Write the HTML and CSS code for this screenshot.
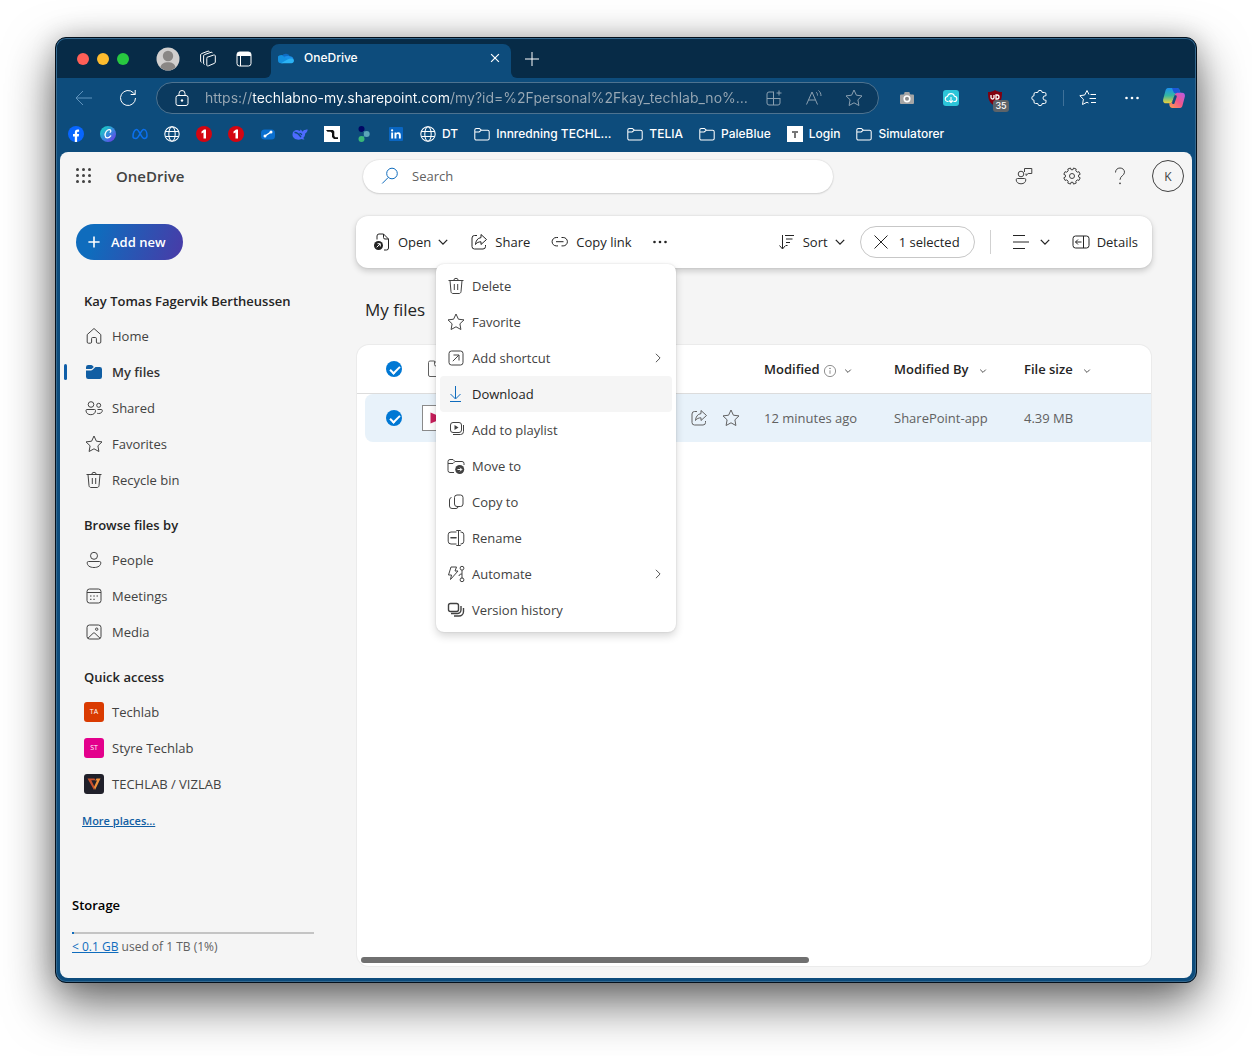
FILE: index.html
```html
<!DOCTYPE html>
<html lang="en">
<head>
<meta charset="utf-8">
<meta name="viewport" content="width=device-width, initial-scale=1">
<title>OneDrive</title>
<link rel="stylesheet" href="styles.css">
</head>
<body>
<svg class="sprite" aria-hidden="true">
  <symbol id="back" viewBox="0 0 20 20"><path d="M18 10H2.500M9 3 2 10l7 7"/></symbol>
  <symbol id="reload" viewBox="0 0 20 20"><path d="M17.500 10A7.500 7.500 0 1 1 15.300 4.700L17 6.500M17.200 2v4.500h-4.500"/></symbol>
  <symbol id="lock" viewBox="0 0 20 20"><rect x="4" y="7.500" width="12" height="10" rx="2"/><path d="M7 7.500V5.500a3 3 0 0 1 6 0v2"/><circle class="fill" cx="10" cy="12.500" r="1.200"/></symbol>
  <symbol id="copies" viewBox="0 0 20 20"><path d="M9 8.300 15.800 6c.8-.2 1.500.2 1.500 1v6c0 .7-.4 1.200-1 1.400l-6 2.500c-.8.300-1.500-.1-1.500-.9V9.500c0-.6 0-1 .2-1.200zM6.500 15.500c-.6-.2-.9-.6-.9-1.200V7c0-.7.300-1.200 1-1.400L13 3.300c.7-.2 1.200 0 1.500.5M3.500 13.300c-.6-.2-.9-.6-.9-1.200V6c0-.7.400-1.200 1-1.400L10 2.200c.7-.2 1.200 0 1.500.5"/></symbol>
  <symbol id="tabs" viewBox="0 0 20 20"><rect x="3" y="3" width="14" height="14" rx="2.500"/><path class="fill" d="M3 7V5.500A2.500 2.500 0 0 1 5.500 3h9A2.500 2.500 0 0 1 17 5.500V7z"/><path d="M6.500 7v10"/></symbol>
  <symbol id="close" viewBox="0 0 20 20"><path d="m3.500 3.500 13 13M16.500 3.500l-13 13"/></symbol>
  <symbol id="plus" viewBox="0 0 20 20"><path d="M10 3v14M3 10h14"/></symbol>
  <symbol id="apps" viewBox="0 0 20 20"><path d="M10 4H5a2 2 0 0 0-2 2v9a2 2 0 0 0 2 2h9a2 2 0 0 0 2-2v-5M3 10.500h13M9.500 4v13M15 2.500v5M12.500 5h5"/></symbol>
  <symbol id="aloud" viewBox="0 0 20 20"><path d="M2.500 16.500 8 4l5.500 12.500M4.500 12h7M12 4c1 .8 1.500 1.800 1.500 3.500M14.500 2.500c1.600 1.300 2.500 3 2.500 5.500"/></symbol>
  <symbol id="star" viewBox="0 0 20 20"><path d="m10 2 2.400 5.200 5.600.7-4.100 3.900 1 5.700L10 14.800l-4.900 2.700 1-5.700L2 7.900l5.600-.7z"/></symbol>
  <symbol id="starlist" viewBox="0 0 20 20"><path d="M11 6.500 9 2.500 6.700 7l-4.900.7 3.600 3.500-.9 5.300L9 14.200l1.500.8M12.500 6.500h5.500M11.500 10.500H18M13 14.500h5"/></symbol>
  <symbol id="puzzle" viewBox="-1 0 20 20"><path d="M5.500 4.500h2.300a2.200 2.200 0 0 1 4.400 0h2.300a1.500 1.500 0 0 1 1.500 1.500v1.800h-.8a2.200 2.200 0 0 0 0 4.400h.8V14a1.500 1.500 0 0 1-1.500 1.500h-2.300a2.200 2.200 0 0 1-4.400 0H5.500A1.500 1.500 0 0 1 4 14v-1.800a2.200 2.200 0 0 1 0-4.400V6a1.500 1.500 0 0 1 1.500-1.500z"/></symbol>
  <symbol id="dots" viewBox="0 0 20 20"><g class="fill"><circle cx="4.500" cy="10" r="1.300"/><circle cx="10" cy="10" r="1.300"/><circle cx="15.500" cy="10" r="1.300"/></g></symbol>
  <symbol id="globe" viewBox="0 0 20 20"><circle cx="10" cy="10" r="9"/><ellipse cx="10" cy="10" rx="4" ry="9"/><path d="M2 7h16M2 13h16"/></symbol>
  <symbol id="folder" viewBox="0 0 20 20"><path d="M1 5A2 2 0 0 1 3 3h3.700l2.500 2.200h7.800a2 2 0 0 1 2 2V15.500a2 2 0 0 1-2 2h-14a2 2 0 0 1-2-2zM1 7.500h5.500l2.700-2.300"/></symbol>
  <symbol id="search" viewBox="0 0 20 20"><circle cx="12" cy="7.500" r="5.300"/><path d="m8.200 11.500-6 6"/></symbol>
  <symbol id="waffle" viewBox="0 0 20 20"><g class="fill"><circle cx="3.500" cy="3.500" r="1.500"/><circle cx="9.500" cy="3.500" r="1.500"/><circle cx="15.500" cy="3.500" r="1.500"/><circle cx="3.500" cy="9.500" r="1.500"/><circle cx="9.500" cy="9.500" r="1.500"/><circle cx="15.500" cy="9.500" r="1.500"/><circle cx="3.500" cy="15.500" r="1.500"/><circle cx="9.500" cy="15.500" r="1.500"/><circle cx="15.500" cy="15.500" r="1.500"/></g></symbol>
  <symbol id="feedback" viewBox="0 0 20 20"><circle cx="7" cy="8" r="2.800"/><path d="M3.500 12.500h7a1.300 1.300 0 0 1 1.300 1.300c0 2.300-1.800 4-4.800 4s-4.800-1.700-4.800-4a1.300 1.300 0 0 1 1.300-1.300zM10.500 6V2.500h7.300v5h-3.600L12 9.500V7.500"/></symbol>
  <symbol id="gear" viewBox="0 0 20 20"><path d="m8.500 2 .5 1.700h2L11.500 2l2.700 1-.4 1.900 1.400 1.300 1.800-.5 1.200 2.600L16.600 9v2l1.600.8-1.200 2.600-1.800-.5-1.400 1.300.4 1.900-2.700 1-.5-1.800H9l-.5 1.800-2.700-1 .4-1.900-1.400-1.300-1.800.5-1.200-2.600L3.400 11V9l-1.600-.7L3 5.700l1.800.5 1.400-1.300L5.800 3z"/><circle cx="10" cy="10" r="2.500"/></symbol>
  <symbol id="help" viewBox="0 0 20 20"><path d="M5.500 6.500C5.500 3.800 7.400 2 10 2s4.500 1.800 4.500 4.200C14.500 9.500 10 10 10 13.800"/><circle class="fill" cx="10" cy="17.300" r=".9"/></symbol>
  <symbol id="home" viewBox="0 0 20 20"><path d="M3.200 8.600 10 2.500l6.800 6.100V16a1.200 1.200 0 0 1-1.200 1.200h-2a1.200 1.200 0 0 1-1.200-1.200v-3.500a1 1 0 0 0-1-1H8.600a1 1 0 0 0-1 1V16a1.200 1.200 0 0 1-1.200 1.200h-2A1.200 1.200 0 0 1 3.200 16z"/></symbol>
  <symbol id="files" viewBox="0 0 20 20"><path class="fill" d="M2 5.200A2.200 2.200 0 0 1 4.200 3h3c.5 0 .9.200 1.200.5L9.800 5 7.600 6.900a1 1 0 0 1-.7.200H2zm0 3.200h5a2 2 0 0 0 1.300-.5L11.500 5h4.300A2.200 2.200 0 0 1 18 7.200v7.600a2.200 2.200 0 0 1-2.200 2.200H4.200A2.200 2.200 0 0 1 2 14.800z"/></symbol>
  <symbol id="people" viewBox="0 0 20 20"><circle cx="7" cy="6.500" r="2.800"/><circle cx="14.700" cy="7.300" r="2"/><path d="M3 11.500h7.500a1 1 0 0 1 1 1c0 2.500-1.800 4.200-4.700 4.200S2 15 2 12.500a1 1 0 0 1 1-1zM13.500 11.500h3.800a1 1 0 0 1 1 1c0 1.800-1.400 3-3.600 3-.5 0-1-.1-1.500-.2"/></symbol>
  <symbol id="person" viewBox="0 0 20 20"><circle cx="10" cy="5.800" r="3.500"/><path d="M4.500 11.500h11a1.300 1.300 0 0 1 1.300 1.300c0 2.800-2.600 4.700-6.800 4.700s-6.800-1.900-6.800-4.700a1.300 1.300 0 0 1 1.300-1.300z"/></symbol>
  <symbol id="bin" viewBox="0 0 20 20"><path d="M2.500 4.500h15M7.800 4.500a2.200 2.200 0 0 1 4.400 0M4 4.500l1 11.200c.1 1 .9 1.800 1.900 1.800h6.200c1 0 1.800-.8 1.900-1.800l1-11.200M8.300 8v6M11.700 8v6"/></symbol>
  <symbol id="calendar" viewBox="0 0 20 20"><rect x="3" y="3" width="14" height="14" rx="2.500"/><path d="M3 6.500h14M6 10h1.500M9.300 10h1.500M12.500 10H14M6 13.300h1.500M9.300 13.300h1.500"/></symbol>
  <symbol id="image" viewBox="0 0 20 20"><rect x="3" y="3" width="14" height="14" rx="2.500"/><path d="m4 16.200 5.200-5a1.200 1.200 0 0 1 1.600 0l5.200 5"/><circle cx="12.700" cy="7.200" r="1.200"/></symbol>
  <symbol id="open" viewBox="0 0 20 20"><path d="M5 7.500V4a2 2 0 0 1 2-2h4.500L16.500 7v9a2 2 0 0 1-2 2H12M11.500 2v3.500A1.500 1.500 0 0 0 13 7h3.500"/><circle class="fill" cx="6.500" cy="13.500" r="4.500"/><path class="knock" d="m4.700 15.300 3.300-3.300M5.500 11.700h2.800v2.800"/></symbol>
  <symbol id="share" viewBox="0 0 20 20"><path d="M8 3.500H5.500a2.500 2.500 0 0 0-2.500 2.500v8.500a2.500 2.500 0 0 0 2.500 2.500H14a2.500 2.500 0 0 0 2.500-2.500V13"/><path d="M12 2.500 17.500 7.500 12 12.500V9.800c-2.500 0-4.200.8-5.500 2.700.3-3.800 2-6.400 5.500-6.900z"/></symbol>
  <symbol id="link" viewBox="0 0 20 20"><path d="M8 5.500H6.300a4.200 4.200 0 0 0 0 8.400H8M11.500 5.500h1.700a4.200 4.200 0 0 1 0 8.400h-1.700M6 9.700h7.500"/></symbol>
  <symbol id="down" viewBox="0 0 20 20"><path d="m3 6.500 7 7 7-7"/></symbol>
  <symbol id="right" viewBox="0 0 20 20"><path d="m6.500 3 7 7-7 7"/></symbol>
  <symbol id="sort" viewBox="0 0 20 20"><path d="M5.500 3v13.500M2.500 13.500l3 3.500 3-3.500M8 3.500h9M9 7h6.500M9 10.500h4M9 13.500h1.500"/></symbol>
  <symbol id="lines" viewBox="0 0 20 20"><path d="M2 3.500h12M2 10h16M2 16.500h12"/></symbol>
  <symbol id="details" viewBox="0 0 20 20"><rect x="2" y="4" width="16" height="12" rx="2.500"/><path d="M12.500 4v12M4.500 10h6M7 7.500 4.500 10 7 12.500"/></symbol>
  <symbol id="shortcut" viewBox="0 0 20 20"><rect x="3" y="3" width="14" height="14" rx="2.500"/><path d="m6.800 13.200 6-6M7.500 7H13v5.500"/></symbol>
  <symbol id="download" viewBox="0 0 20 20"><path d="M9.500 2v12.500M4.500 10l5 5 5-5M4 17.500h11"/></symbol>
  <symbol id="playlist" viewBox="0 0 20 20"><rect x="4.500" y="2.500" width="11" height="10" rx="2.500"/><path d="M17.500 5v6.500a3 3 0 0 1-3 3H7"/><path class="fill" d="m8.500 5 4 2.500-4 2.500z"/></symbol>
  <symbol id="move" viewBox="0 0 20 20"><path d="M8 16.500H4a2 2 0 0 1-2-2v-9a2 2 0 0 1 2-2h3l2 2h7a2 2 0 0 1 2 2V9M2 7.500h5l2-2"/><circle class="fill" cx="13.700" cy="13.500" r="4.500"/><path class="knock" d="M11.500 13.500h4.200M14 11.700l1.800 1.800-1.800 1.800"/></symbol>
  <symbol id="copyto" viewBox="0 0 20 20"><rect x="8.500" y="3" width="8.500" height="11.500" rx="2.500"/><path d="M5.500 5.500A2.500 2.500 0 0 0 3.500 8v6A2.500 2.500 0 0 0 6 16.500h4a2 2 0 0 0 2-2"/></symbol>
  <symbol id="rename" viewBox="0 0 20 20"><path d="M10.500 4H5a2.800 2.800 0 0 0-2.800 2.800v6.400A2.800 2.800 0 0 0 5 16h5.500M14.500 4h.5a2.800 2.800 0 0 1 2.800 2.800v6.400A2.800 2.800 0 0 1 15 16h-.5M12.500 2.500v15M10.300 2.500h4.400M10.300 17.500h4.400M4.500 9.500h6M4.500 10h6"/></symbol>
  <symbol id="automate" viewBox="0 0 20 20"><path d="M5 3h5.500L9 7h3l-7.500 8.500L5.500 11H2.500zM16 6v8.500M16 10c-1.500 0-3 .5-3 2"/><circle cx="16" cy="4.200" r="1.900"/><circle cx="16" cy="15.800" r="1.900"/></symbol>
  <symbol id="versions" viewBox="0 0 20 20"><rect x="2.500" y="3.500" width="10" height="8" rx="2" stroke-width="1.400"/><path stroke-width="1.400" d="M15 6v3.800a3.700 3.700 0 0 1-3.700 3.700H5M17.500 8v3.500a4.500 4.500 0 0 1-4.500 4.500H8"/></symbol>
  <symbol id="info" viewBox="0 0 20 20"><circle cx="10" cy="10" r="8"/><path d="M10 9v5"/><circle class="fill" cx="10" cy="6.300" r="1"/></symbol>
  <symbol id="page" viewBox="0 0 20 20"><path d="M3.500 3.500A1.500 1.500 0 0 1 5 2h4.500l5 5v9.500A1.500 1.500 0 0 1 13 17.500H5a1.500 1.500 0 0 1-1.500-1.500zM9.500 2v3.500A1.500 1.500 0 0 0 11 7h3.500"/></symbol>
</svg>

<div class="window">
  <div class="titlebar">
    <div class="titlebar-start">
      <div class="lights"><button class="light red" aria-label="Close window"></button><button class="light amber" aria-label="Minimise window"></button><button class="light green" aria-label="Zoom window"></button></div>
      <button class="profile" aria-label="Profile"><svg viewBox="0 0 24 24"><circle cx="12" cy="12" r="11.500" fill="#d1cfce"/><circle cx="12" cy="9" r="5.200" fill="#8a8785"/><path d="M4.300 20.500c1-4 4-5.300 7.700-5.300s6.700 1.300 7.700 5.300a11.500 11.500 0 0 1-15.400 0z" fill="#8a8785"/></svg></button>
      <button class="tool" aria-label="Workspaces"><svg class="icon"><use href="#copies"/></svg></button>
      <button class="tool" aria-label="Tab actions"><svg class="icon"><use href="#tabs"/></svg></button>
    </div>
    <div class="tab-slot">
      <div class="tab">
        <svg class="cloud" viewBox="0 0 16 16"><path d="M4 5.800A4.500 4.500 0 0 1 12 6.500L8 10 1 10z" fill="#0f6cc4"/><path d="M11.500 6.300A3.500 3.500 0 0 1 15.500 9.500L9 10.500 6 6.800c2-.8 3.800-.9 5.500-.5z" fill="#1b8fe8"/><path d="M0 10.300a3.400 3.400 0 0 1 6-3.500l6 3.700-7 2.800H3a3 3 0 0 1-3-3z" fill="#1490df"/><path d="M3 13.300 9.500 9.500c2-1 4.500-1.500 6-.3 1.200 2-.2 4.100-2 4.100z" fill="#2bb3f5"/></svg>
        <span class="tab-title">OneDrive</span>
        <button class="tab-close" aria-label="Close tab"><svg class="icon tiny"><use href="#close"/></svg></button>
      </div>
    </div>
    <div class="titlebar-end"><button class="tool" aria-label="New tab"><svg class="icon"><use href="#plus"/></svg></button></div>
  </div>

  <div class="toolbar">
    <button class="bar-btn dim" aria-label="Back"><svg class="icon"><use href="#back"/></svg></button>
    <button class="bar-btn" aria-label="Reload"><svg class="icon"><use href="#reload"/></svg></button>
    <div class="address">
      <svg class="icon"><use href="#lock"/></svg>
      <input class="url" type="text" aria-label="Address" value="https://techlabno-my.sharepoint.com/my?id=%2Fpersonal%2Fkay_techlab_no%…">
      <button class="addr-btn" aria-label="Apps"><svg class="icon"><use href="#apps"/></svg></button>
      <button class="addr-btn" aria-label="Read aloud"><svg class="icon"><use href="#aloud"/></svg></button>
      <button class="addr-btn" aria-label="Add to favourites"><svg class="icon"><use href="#star"/></svg></button>
    </div>
    <div class="extensions">
      <button class="bar-btn" aria-label="Screenshot"><svg class="badge-icon" viewBox="0 0 16 16"><path d="M2 4.500h2.500L5.500 3V2h5v1l1 1.500H14a1 1 0 0 1 1 1V13a1 1 0 0 1-1 1H2a1 1 0 0 1-1-1V5.500a1 1 0 0 1 1-1z" fill="#a5a5a5"/><circle cx="8" cy="8.800" r="2.800" fill="#8c8c8c" stroke="#fff" stroke-width="1.600"/></svg></button>
      <button class="bar-btn" aria-label="Downloader"><svg class="badge-icon" viewBox="0 0 16 16"><rect width="16" height="16" rx="3" fill="#2cc5d9"/><path d="M5.500 11.500H5a2.500 2.500 0 0 1-.5-5 3.600 3.600 0 0 1 7-.2A2.600 2.600 0 0 1 11 11.500h-.5M8 7v5.500M6 10.500l2 2 2-2" fill="none" stroke="#fff" stroke-width="1.100"/></svg></button>
      <button class="bar-btn counter" aria-label="Blocker"><svg class="badge-icon" viewBox="0 0 16 16"><path d="M8 0c2 1.500 4 2 7 2 0 7-1 11-7 14C2 13 1 9 1 2c3 0 5-.5 7-2z" fill="#800010"/><path d="M4 5v2.500a1.500 1.500 0 0 0 3 0V5M9 9V5h1a2 2 0 0 1 0 4z" fill="none" stroke="#fff" stroke-width="1.300"/></svg><span class="count">35</span></button>
      <button class="bar-btn" aria-label="Extensions"><svg class="icon"><use href="#puzzle"/></svg></button>
      <span class="bar-rule"></span>
      <button class="bar-btn" aria-label="Favourites"><svg class="icon"><use href="#starlist"/></svg></button>
      <button class="bar-btn" aria-label="Settings and more"><svg class="icon"><use href="#dots"/></svg></button>
      <button class="copilot" aria-label="Copilot"><svg viewBox="0 0 22 20"><defs><linearGradient id="cp1" x1="0" y1="0" x2="0" y2="1"><stop offset="0" stop-color="#1b8ff0"/><stop offset=".5" stop-color="#35b8a0"/><stop offset="1" stop-color="#f2d13a"/></linearGradient><linearGradient id="cp2" x1="1" y1="0" x2="0" y2="1"><stop offset="0" stop-color="#b45be8"/><stop offset=".5" stop-color="#f0568c"/><stop offset="1" stop-color="#fba04a"/></linearGradient></defs><path d="M5 0h9c1.500 0 2.300 1 2.700 2.500L17.500 5H14c-1.500 0-2 1-2.400 2.300L9.500 13c-.5 1.500-1.300 2.300-3 2.300H3c-2.500 0-3.400-1.800-2.700-4.500L2.500 2.500C3 .9 3.700 0 5 0z" fill="url(#cp1)"/><path d="M9 0h5c1.500 0 2.300 1 2.700 2.500L17.500 5H14L11 5z" fill="#1c57d8"/><path d="M17 20H9.500c-1.800 0-2.600-1-3-2.500l-.3-2.200c2 0 2.900-.8 3.400-2.300L12 6.500c.5-1.200 1.500-1.700 3.400-1.700H19c2.500 0 3.400 1.800 2.700 4.500l-2.200 8.200c-.5 1.600-1 2.500-2.500 2.500z" fill="url(#cp2)"/><path d="m12.500 8.500-2.200 6.300" stroke="#0d4c7c" stroke-width="2.500" stroke-linecap="round"/></svg></button>
    </div>
  </div>

  <nav class="bookmarks" aria-label="Bookmarks">
    <a class="mark" href="#" aria-label="Facebook"><svg viewBox="0 0 16 16"><circle cx="8" cy="8" r="8" fill="#0866ff"/><path d="M6.800 16v-5.500H5V8.100h1.800V6.900c0-2.200 1-3.300 3-3.300.5 0 1 .1 1.300.2v2h-.9c-.9 0-1.100.4-1.100 1.200v1.100h2l-.4 2.400H9.100V16z" fill="#fff"/></svg></a>
    <a class="mark" href="#" aria-label="Canva"><svg viewBox="0 0 16 16"><defs><linearGradient id="cv" x1="0" y1="0" x2="1" y2="1"><stop offset=".2" stop-color="#1fbfc9"/><stop offset=".6" stop-color="#3e7be0"/><stop offset="1" stop-color="#7d2ae8"/></linearGradient></defs><circle cx="8" cy="8" r="8" fill="url(#cv)"/><path d="M10.200 6.300c1-.6.800-2.800-1.200-2.600-2.400.2-4.200 3.300-3.900 5.800.3 3 3.600 3.200 5.600.4" fill="none" stroke="#fff" stroke-width="1.300" stroke-linecap="round"/></svg></a>
    <a class="mark" href="#" aria-label="Meta"><svg viewBox="0 0 16 16"><path d="M1 10.500C1 7 2.500 3.500 4.500 3.500c3 0 4.500 9 7.800 9C14 12.500 15 11.500 15 9.500c0-3-1.300-6-3.300-6-3 0-4.500 9-7.800 9C2 12.500 1 12 1 10.500z" fill="none" stroke="#0b70ee" stroke-width="1.500"/></svg></a>
    <a class="mark" href="#" aria-label="Site"><svg class="icon"><use href="#globe"/></svg></a>
    <a class="mark" href="#" aria-label="News"><svg viewBox="0 0 16 16"><circle cx="8" cy="8" r="8" fill="#d40511"/><path d="M5.500 5.500 8 3.500h2V12.500H7.500V6.500l-2 1z" fill="#fff"/></svg></a>
    <a class="mark" href="#" aria-label="News archive"><svg viewBox="0 0 16 16"><circle cx="8" cy="8" r="8" fill="#d40511"/><path d="M5.500 5.500 8 3.500h2V12.500H7.500V6.500l-2 1z" fill="#fff"/></svg></a>
    <a class="mark" href="#" aria-label="Cloud"><svg viewBox="0 0 16 16"><rect x="1" y="3.500" width="14" height="10" rx="3.500" fill="#0a6fcf"/><path d="m5 10 6-4" stroke="#fff" stroke-width="1.500"/><circle cx="5" cy="10" r="1.500" fill="#fff"/><circle cx="11" cy="6" r="1.500" fill="#fff"/></svg></a>
    <a class="mark" href="#" aria-label="Whale"><svg viewBox="0 0 16 16"><path d="M.5 8.500C.5 5.500 2.500 4 5 4c1.500 0 2.200.8 3 1l.5-1.500c.8.500 1.700 1.500 2 2.200.5-1.200 1.500-1.700 2.500-1.700l2.500-.8c.3 2-.8 3.500-2.300 4.300 0 2-1 3.500-2 4.500l1.300 1.200c-1 .5-2.200.3-3-.2C5.500 14.700.5 13 .5 8.500z" fill="#4d6bfe"/><path d="M2.500 6.500c3-.3 5 2.500 6.500 4.700M7.500 7.500c1-.3 2 .5 2.200 1.500" fill="none" stroke="#0d4c7c" stroke-width="1.300"/></svg></a>
    <a class="mark" href="#" aria-label="Techlab"><svg viewBox="0 0 16 16"><path d="M0 0h16v16H0z" fill="#fff"/><path d="M2 4h7l1.300 1.500V10l1 1.200H14V13H10L8 11V7L6.500 5.800H3.500z" fill="#111"/></svg></a>
    <a class="mark" href="#" aria-label="Dashboard"><svg viewBox="0 0 16 16"><path d="m6 4 5 4-5 4" fill="none" stroke="#2c7aa0" stroke-width="1.500"/><circle cx="5.500" cy="3" r="3" fill="#020764"/><circle cx="10.700" cy="8" r="3" fill="#5ba5b8"/><circle cx="5.500" cy="13" r="3" fill="#3ab778"/></svg></a>
    <a class="mark" href="#" aria-label="LinkedIn"><svg viewBox="0 0 16 16"><rect x="1" y="1" width="14" height="14" rx="1" fill="#0a66c2"/><path d="M3.200 6.500h1.900v6H3.200zM6.500 6.500h1.800v.9c.9-1.600 4.500-1.600 4.500 1.500v3.600h-1.900V9.400c0-1.900-2.500-1.700-2.500 0v3.100H6.500z" fill="#fff"/><circle cx="4.100" cy="4.400" r="1.100" fill="#fff"/></svg></a>
    <a class="mark" href="#"><svg class="icon"><use href="#globe"/></svg>DT</a>
    <a class="mark" href="#"><svg class="icon"><use href="#folder"/></svg>Innredning TECHL…</a>
    <a class="mark" href="#"><svg class="icon"><use href="#folder"/></svg>TELIA</a>
    <a class="mark" href="#"><svg class="icon"><use href="#folder"/></svg>PaleBlue</a>
    <a class="mark" href="#"><svg viewBox="0 0 16 16"><path d="M0 0h16v16H0z" fill="#fff"/><path d="M5 5h6v2H9v5H7V7H5z" fill="#777"/></svg>Login</a>
    <a class="mark" href="#"><svg class="icon"><use href="#folder"/></svg>Simulatorer</a>
  </nav>

  <div class="page">
    <header class="header">
      <button class="waffle" aria-label="App launcher"><svg class="icon"><use href="#waffle"/></svg></button>
      <a class="brand" href="#">OneDrive</a>
      <label class="search"><svg class="icon"><use href="#search"/></svg><input type="search" placeholder="Search" aria-label="Search"></label>
      <div class="header-tools">
        <button class="head-btn" aria-label="Feedback"><svg class="icon"><use href="#feedback"/></svg></button>
        <button class="head-btn" aria-label="Settings"><svg class="icon"><use href="#gear"/></svg></button>
        <button class="head-btn" aria-label="Help"><svg class="icon"><use href="#help"/></svg></button>
        <button class="head-btn" aria-label="Account"><span class="avatar">K</span></button>
      </div>
    </header>

    <div class="body">
      <aside class="sidebar">
        <button class="add-new"><svg class="icon"><use href="#plus"/></svg>Add new</button>
        <nav class="nav" aria-label="Files">
          <h2>Kay Tomas Fagervik Bertheussen</h2>
          <a class="nav-row" href="#"><svg class="icon"><use href="#home"/></svg>Home</a>
          <a class="nav-row current" href="#" aria-current="page"><svg class="icon"><use href="#files"/></svg>My files</a>
          <a class="nav-row" href="#"><svg class="icon"><use href="#people"/></svg>Shared</a>
          <a class="nav-row" href="#"><svg class="icon"><use href="#star"/></svg>Favorites</a>
          <a class="nav-row" href="#"><svg class="icon"><use href="#bin"/></svg>Recycle bin</a>
          <h2>Browse files by</h2>
          <a class="nav-row" href="#"><svg class="icon"><use href="#person"/></svg>People</a>
          <a class="nav-row" href="#"><svg class="icon"><use href="#calendar"/></svg>Meetings</a>
          <a class="nav-row" href="#"><svg class="icon"><use href="#image"/></svg>Media</a>
          <h2>Quick access</h2>
          <a class="nav-row" href="#"><span class="tile orange">TA</span>Techlab</a>
          <a class="nav-row" href="#"><span class="tile pink">ST</span>Styre Techlab</a>
          <a class="nav-row" href="#"><span class="tile dark"><svg viewBox="0 0 20 20"><path d="M3.500 4.500h7l1 1.700H7.300l3.500 7.300L10 16z" fill="#c9502c"/><path d="M12.500 4.500h4L11 16l-1-3 3-6.500h-1.700z" fill="#f0913a"/></svg></span>TECHLAB / VIZLAB</a>
        </nav>
        <a class="more" href="#">More places...</a>
        <section class="storage">
          <h2>Storage</h2>
          <div class="meter"><div class="meter-used" style="width:1%"></div></div>
          <p><a href="#">&lt; 0.1 GB</a> used of 1 TB (1%)</p>
        </section>
      </aside>

      <main class="main">
        <div class="commands">
          <button class="cmd"><svg class="icon"><use href="#open"/></svg>Open<svg class="icon chev"><use href="#down"/></svg></button>
          <button class="cmd"><svg class="icon"><use href="#share"/></svg>Share</button>
          <button class="cmd"><svg class="icon"><use href="#link"/></svg>Copy link</button>
          <button class="cmd more-cmd" aria-label="More actions" aria-expanded="true"><svg class="icon"><use href="#dots"/></svg></button>
          <button class="cmd sort"><svg class="icon"><use href="#sort"/></svg>Sort<svg class="icon chev"><use href="#down"/></svg></button>
          <button class="cmd selected"><svg class="icon"><use href="#close"/></svg>1 selected</button>
          <span class="cmd-rule"></span>
          <button class="cmd view" aria-label="View"><svg class="icon"><use href="#lines"/></svg><svg class="icon chev"><use href="#down"/></svg></button>
          <button class="cmd"><svg class="icon"><use href="#details"/></svg>Details</button>

          <div class="menu" role="menu">
            <button role="menuitem"><svg class="icon"><use href="#bin"/></svg>Delete</button>
            <button role="menuitem"><svg class="icon"><use href="#star"/></svg>Favorite</button>
            <button role="menuitem"><svg class="icon"><use href="#shortcut"/></svg>Add shortcut<svg class="icon arrow"><use href="#right"/></svg></button>
            <button role="menuitem" class="hover"><svg class="icon"><use href="#download"/></svg>Download</button>
            <button role="menuitem"><svg class="icon"><use href="#playlist"/></svg>Add to playlist</button>
            <button role="menuitem"><svg class="icon"><use href="#move"/></svg>Move to</button>
            <button role="menuitem"><svg class="icon"><use href="#copyto"/></svg>Copy to</button>
            <button role="menuitem"><svg class="icon"><use href="#rename"/></svg>Rename</button>
            <button role="menuitem"><svg class="icon"><use href="#automate"/></svg>Automate<svg class="icon arrow"><use href="#right"/></svg></button>
            <button role="menuitem"><svg class="icon"><use href="#versions"/></svg>Version history</button>
          </div>
        </div>

        <h1>My files</h1>

        <div class="card">
          <table class="files">
            <colgroup><col class="c-lead"><col class="c-check"><col><col class="c-col"><col class="c-col"><col class="c-size"></colgroup>
            <thead>
              <tr>
                <td></td>
                <td><input class="tick" type="checkbox" checked aria-label="Select all"></td>
                <td><svg class="icon head-page"><use href="#page"/></svg></td>
                <th>Modified <svg class="icon small info"><use href="#info"/></svg><svg class="icon caret"><use href="#down"/></svg></th>
                <th>Modified By <svg class="icon caret"><use href="#down"/></svg></th>
                <th>File size <svg class="icon caret"><use href="#down"/></svg></th>
              </tr>
            </thead>
            <tbody>
              <tr>
                <td></td>
                <td class="first"><input class="tick" type="checkbox" checked aria-label="Select file"></td>
                <td><div class="name-cell"><svg class="video" viewBox="0 0 36 26"><rect x=".5" y=".5" width="35" height="25" fill="#fff" stroke="#8a8a8a"/><path d="m8.500 7.500 13 5.500-13 5.500z" fill="#c81e5b"/></svg><span class="row-tools"><button aria-label="Share file"><svg class="icon"><use href="#share"/></svg></button><button aria-label="Favorite file"><svg class="icon"><use href="#star"/></svg></button></span></div></td>
                <td>12 minutes ago</td>
                <td>SharePoint-app</td>
                <td>4.39 MB</td>
              </tr>
            </tbody>
          </table>
          <div class="scroll"><div class="thumb"></div></div>
        </div>
      </main>
    </div>
  </div>
</div>
</body>
</html>
```
FILE: styles.css
```css
* { box-sizing: border-box; }

body {
  margin: 0;
  min-height: 100vh;
  padding: 37px 55px 73px;
  display: flex;
  background: #fff;
  color: #242424;
  font: 13px/20px "Open Sans", "Noto Sans", sans-serif;
}

button, input { font: inherit; color: inherit; }
button {
  margin: 0;
  padding: 0;
  border: 0;
  background: none;
  display: flex;
  align-items: center;
  justify-content: center;
  flex-shrink: 0;
}
a { color: inherit; text-decoration: none; }
h1, h2, p { margin: 0; }

.sprite { position: absolute; width: 0; height: 0; }
.icon {
  width: 20px;
  height: 20px;
  flex-shrink: 0;
  fill: none;
  stroke: currentColor;
  stroke-width: 1;
}
.fill { fill: currentColor; stroke: none; }
.knock { stroke: #fff; }

/* Browser window */
.window {
  flex: 1;
  min-width: 0;
  display: flex;
  flex-direction: column;
  padding: 1px 4px 4px;
  border: 1px solid #03101c;
  border-radius: 11px;
  background: #0d4c7c;
  box-shadow: inset 0 0 0 1px #35698f, 0 20px 50px rgba(0, 0, 0, .6), 0 0 24px rgba(0, 0, 0, .18);
  color: #fff;
}

.titlebar {
  display: flex;
  height: 39px;
  margin: 0 -3px;
  font: 500 12px/16px Inter, "Liberation Sans", sans-serif;
}
.titlebar-start, .titlebar-end, .tab-slot { background: #072b47; }
.titlebar-start {
  flex: 0 0 214px;
  display: flex;
  align-items: center;
  padding-left: 20px;
  border-radius: 9px 0 6px 0;
}
.titlebar-end {
  flex: 1;
  display: flex;
  align-items: center;
  padding-left: 3px;
  border-radius: 0 9px 0 6px;
}
.lights { display: flex; gap: 8px; }
.light { width: 12px; height: 12px; border-radius: 50%; }
.red { background: #ff5f57; }
.amber { background: #febc2e; }
.green { background: #28c840; }
.profile { width: 24px; margin: 0 10px 0 27px; }
.profile svg { width: 24px; height: 24px; }
.tool { width: 36px; height: 32px; }
.tab-slot { flex: 0 1 240px; padding-top: 5px; }
.tab {
  height: 34px;
  display: flex;
  align-items: center;
  padding: 0 8px 6px 7px;
  border-radius: 8px 8px 0 0;
  background: #0d4c7c;
}
.cloud { width: 16px; height: 16px; margin-right: 10px; }
.tab-title { flex: 1; }
.tab-close { width: 16px; height: 16px; }
.tiny { width: 12px; height: 12px; stroke-width: 2; }

.toolbar {
  display: flex;
  align-items: center;
  height: 40px;
  margin: 0 -2px;
}
.bar-btn { width: 44px; height: 32px; }
.toolbar > .bar-btn:first-child { margin-left: 4px; }
.dim { color: #5f93bd; }
.address {
  flex: 1;
  min-width: 0;
  height: 32px;
  display: flex;
  align-items: center;
  margin: 0 6px;
  padding: 0 4px 0 15px;
  border: 1px solid #4e7390;
  border-radius: 16px;
  background: #0b3a5f;
}
.url {
  flex: 1;
  min-width: 0;
  height: 24px;
  margin-left: 13px;
  padding: 0;
  border: 0;
  font: 14px/24px Inter, "Liberation Sans", sans-serif;
  color: #9aa9b5;
  background: linear-gradient(90deg, #9aa9b5 48px, #fff 48px 246px, #9aa9b5 246px) text;
  -webkit-text-fill-color: transparent;
}
.addr-btn { width: 40px; height: 30px; color: #8ba0b1; }
.extensions { display: flex; align-items: center; }
.badge-icon { width: 16px; height: 16px; }
.counter { position: relative; }
.count {
  position: absolute;
  left: 20px;
  top: 18px;
  width: 16px;
  border-radius: 3px;
  background: #5d6368;
  font: 500 9px/12px Inter, "Liberation Sans", sans-serif;
  text-align: center;
}
.bar-rule { width: 1px; height: 16px; margin: 0 2px; background: #3f7199; }
.copilot { width: 40px; }
.copilot svg { width: 22px; height: 20px; }

.bookmarks {
  display: flex;
  align-items: center;
  height: 34px;
  overflow: hidden;
  font: 500 12px/16px Inter, "Liberation Sans", sans-serif;
  white-space: nowrap;
}
.mark { display: flex; align-items: center; gap: 6px; padding: 0 8px 2px; }
.mark svg { width: 16px; height: 16px; flex-shrink: 0; }
.mark .icon { stroke-width: 1.300; }

/* OneDrive page */
.page {
  flex: 1;
  display: flex;
  flex-direction: column;
  border-radius: 8px;
  background: #f5f5f5;
  color: #242424;
}
.header { display: flex; align-items: center; height: 48px; color: #424242; }
.waffle { width: 48px; height: 48px; }
.brand { width: 255px; padding-left: 8px; font-size: 15px; font-weight: 600; }
.search {
  flex: 0 1 470px;
  height: 33px;
  display: flex;
  align-items: center;
  gap: 12px;
  padding: 0 17px;
  border-radius: 17px;
  background: #fff;
  box-shadow: 0 0 2px rgba(0, 0, 0, .14), 0 1px 2px rgba(0, 0, 0, .12);
}
.search .icon { color: #0f6cbd; }
.search input { flex: 1; min-width: 0; padding: 0; border: 0; background: none; }
.search input::placeholder { color: #616161; opacity: 1; }
.header-tools { display: flex; margin-left: auto; }
.head-btn { width: 48px; height: 48px; }
.avatar {
  width: 32px;
  height: 32px;
  border: 1px solid #424242;
  border-radius: 50%;
  font-size: 12px;
  line-height: 32px;
}

.body { flex: 1; display: flex; }
.sidebar {
  flex: 0 0 296px;
  display: flex;
  flex-direction: column;
  align-items: flex-start;
  padding: 24px 0 21px;
}
.add-new {
  width: 107px;
  height: 36px;
  justify-content: flex-start;
  margin: 0 0 14px 16px;
  padding-left: 10px;
  gap: 9px;
  border-radius: 18px;
  background: linear-gradient(110deg, #0f6cbd 20%, #4a3aa7);
  color: #fff;
  font-weight: 600;
}
.add-new .icon { width: 16px; height: 16px; stroke-width: 2; }
.nav { align-self: stretch; }
h2 { font-size: 13px; font-weight: 600; line-height: 20px; }
.nav h2 { padding: 17px 24px 7px; }
.nav-row {
  display: flex;
  align-items: center;
  gap: 8px;
  height: 36px;
  padding-left: 24px;
  color: #424242;
}
.current { color: #333; font-weight: 600; }
.current::before {
  content: "";
  width: 3px;
  height: 16px;
  margin: 0 9px 0 -20px;
  border-radius: 2px;
  background: #0f5ea8;
}
.current .icon { color: #115ea3; stroke: none; }
.tile {
  width: 20px;
  height: 20px;
  border-radius: 3px;
  color: #fff;
  font-size: 7px;
  text-align: center;
}
.tile svg { display: block; width: 20px; height: 20px; }
.orange { background: #da3b01; }
.pink { background: #e3008c; }
.dark { background: #20202a; }
.more {
  margin: 9px 0 0 22px;
  color: #115ea3;
  font-size: 11px;
  font-weight: 600;
  text-decoration: underline;
}
.storage {
  align-self: stretch;
  margin: auto 42px 0 12px;
  color: #616161;
  font-size: 12px;
}
.storage h2 { color: #000; }
.storage a { color: #0f6cbd; text-decoration: underline; }
.meter { height: 2px; margin: 17px 0 3px; background: #c4c4c4; }
.meter-used { height: 2px; background: #0f6cbd; }

.main {
  flex: 1;
  min-width: 0;
  display: flex;
  flex-direction: column;
  padding: 16px 40px 12px 0;
}
.commands {
  position: relative;
  display: flex;
  align-items: center;
  height: 52px;
  padding: 0 4px 0 6px;
  border-radius: 12px;
  background: #fff;
  box-shadow: 0 0 2px rgba(0, 0, 0, .12), 0 3px 6px rgba(0, 0, 0, .18);
}
.cmd { height: 32px; gap: 6px; padding: 0 10px; }
.cmd .chev { width: 12px; height: 12px; stroke-width: 2.200; }
.more-cmd { padding: 0 8px; }
.sort { margin-left: auto; }
.view { gap: 8px; }
.selected {
  gap: 8px;
  margin: 0 15px 0 4px;
  padding: 0 14px 0 10px;
  border: 1px solid #c7c7c7;
  border-radius: 16px;
}
.cmd-rule { width: 1px; height: 24px; margin-right: 10px; background: #d1d1d1; }

.menu {
  position: absolute;
  z-index: 1;
  left: 80px;
  top: 48px;
  width: 240px;
  padding: 4px;
  border-radius: 8px;
  background: #fff;
  box-shadow: 0 0 2px rgba(0, 0, 0, .14), 0 4px 8px rgba(0, 0, 0, .16);
}
.menu button {
  width: 100%;
  height: 36px;
  justify-content: flex-start;
  gap: 6px;
  padding: 0 8px 0 6px;
  border-radius: 4px;
  color: #424242;
}
.menu .hover { background: #f5f5f5; color: #242424; }
.hover .icon { color: #0f6cbd; }
.menu .arrow { width: 12px; height: 12px; margin-left: auto; stroke-width: 1.500; }

h1 { padding: 30px 9px 23px; font-size: 17px; font-weight: 400; line-height: 24px; }

.card {
  flex: 1;
  display: flex;
  flex-direction: column;
  margin: 0 1px;
  border-radius: 12px;
  background: #fff;
  box-shadow: 0 0 0 1px #ebebeb;
}
.files { width: 100%; table-layout: fixed; border-collapse: separate; border-spacing: 0; }
.c-lead { width: 8px; }
.c-check { width: 57px; }
.c-col { width: 130px; }
.c-size { width: 127px; }
.files th, .files td { height: 48px; padding: 0; text-align: left; vertical-align: middle; white-space: nowrap; }
.files thead td, .files thead th { height: 49px; border-bottom: 1px solid #dcdcdc; font-weight: 600; }
.files th .icon { vertical-align: middle; }
.files .small { width: 14px; height: 14px; }
.files .caret { width: 8px; height: 8px; margin-left: 7px; stroke-width: 2; }
.files .info { color: #616161; }
.files tbody td { color: #616161; background: #e8f2fa; }
.files tbody td:first-child { background: none; }
.files .first { border-radius: 8px 0 0 8px; }
.head-page { display: block; margin-left: 3px; color: #616161; }
.tick {
  appearance: none;
  display: block;
  width: 16px;
  height: 16px;
  margin: 0 0 0 21px;
  border-radius: 50%;
  background: #0078d4;
}
.tick::before {
  content: "";
  display: block;
  width: 8px;
  height: 4px;
  margin: 5px 0 0 4px;
  border: solid #fff;
  border-width: 0 0 2px 2px;
  transform: rotate(-45deg);
}
.name-cell { display: flex; align-items: center; justify-content: space-between; }
.video { width: 36px; height: 26px; }
.row-tools { display: flex; gap: 12px; margin-right: 23px; }
.scroll { margin-top: auto; padding: 3px 4px; }
.thumb { width: 57%; height: 6px; border-radius: 3px; background: #707070; }
```
